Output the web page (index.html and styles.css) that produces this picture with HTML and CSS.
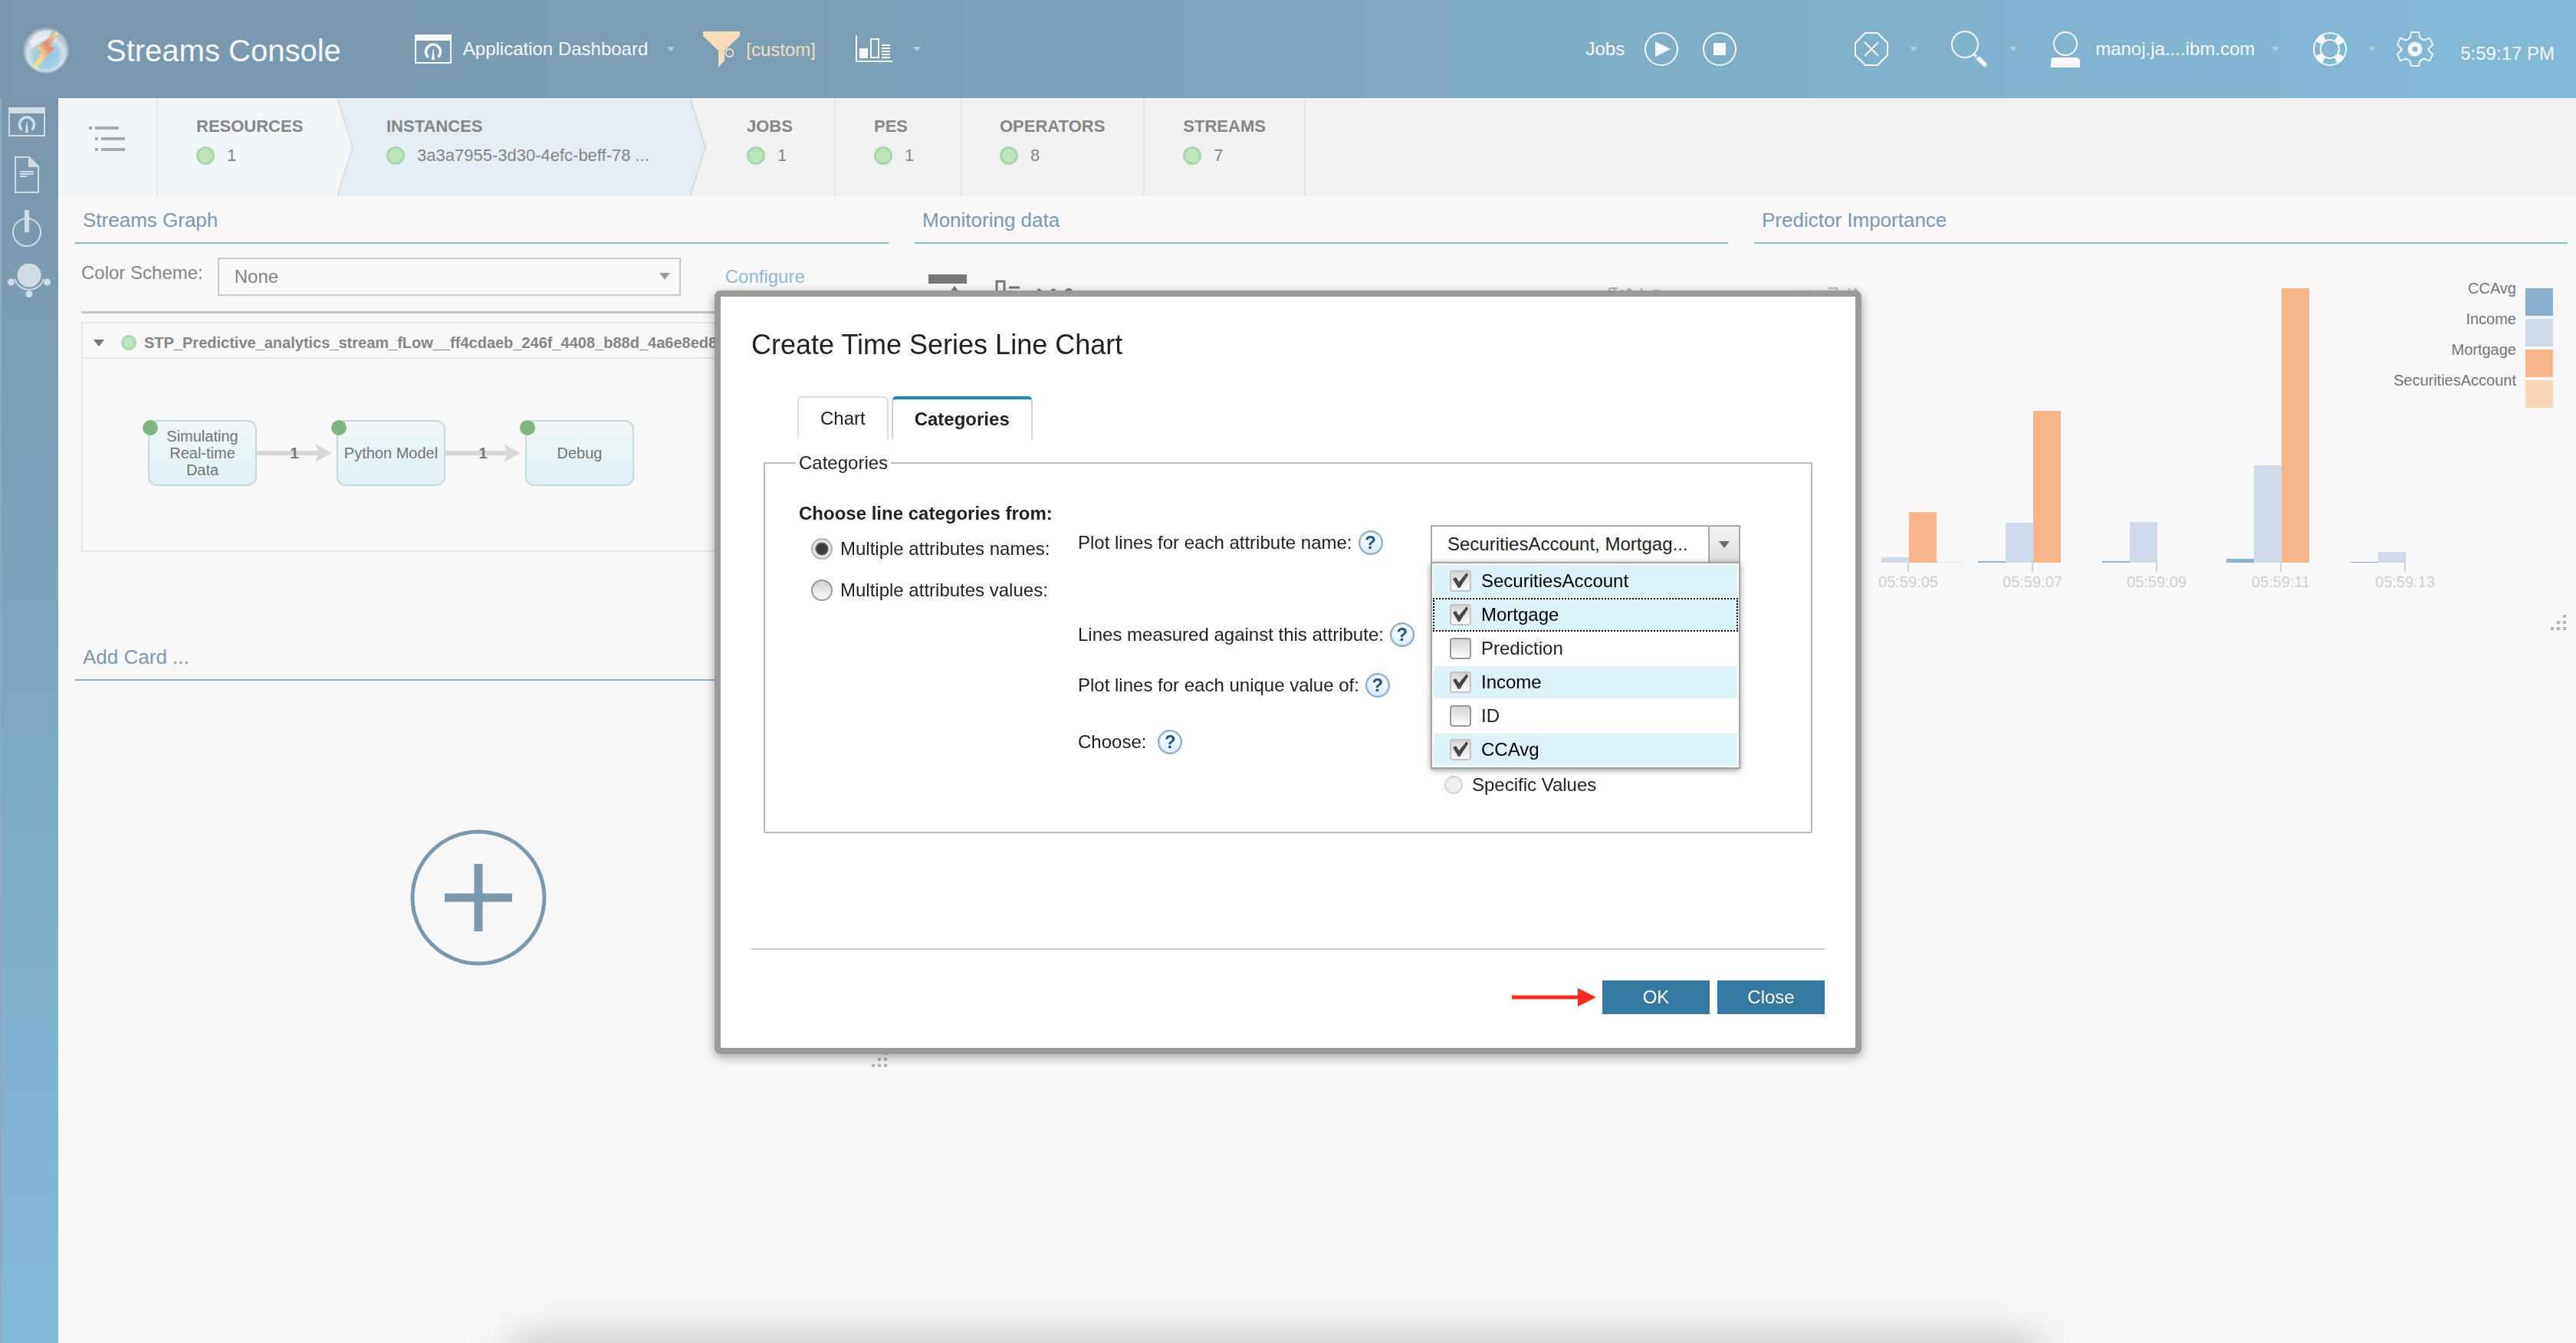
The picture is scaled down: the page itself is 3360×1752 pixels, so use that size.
FILE: index.html
```html
<!DOCTYPE html>
<html lang="en">
<head>
<meta charset="utf-8">
<title>Streams Console</title>
<meta name="viewport" content="width=device-width, initial-scale=1">
<link rel="stylesheet" href="styles.css">
</head>
<body>
<svg class="defs" width="0" height="0" aria-hidden="true">
  <symbol id="i-dash" viewBox="0 0 48 38"><path d="M1 1h46v36H1z" fill="none" stroke="currentColor" stroke-width="2"/><path d="M1 1h46v7H1z" fill="currentColor"/><path d="M17.500 29.500a9.500 9.500 0 1 1 13 0" fill="none" stroke="currentColor" stroke-width="3.500"/><path d="M23.500 19h1l1.500 14h-4z" fill="currentColor"/></symbol>
  <symbol id="i-chev" viewBox="0 0 10 6"><path d="M0 0h10L5 6z" fill="currentColor"/></symbol>
  <symbol id="i-grip" viewBox="0 0 20 20"><path d="M16 0h4v4h-4zM8 8h4v4H8zM16 8h4v4h-4zM0 16h4v4H0zM8 16h4v4H8zM16 16h4v4h-4z" fill="#b4b4b4"/></symbol>
  <symbol id="i-arrow" viewBox="0 0 104 26"><path d="M0 13h88" stroke="#d8d8d8" stroke-width="6"/><path d="M76 1l22 12-22 12 5-12z" fill="#d8d8d8"/></symbol>
</svg>

<header class="topbar">
  <svg class="logo" viewBox="0 0 60 62" aria-hidden="true">
    <defs>
      <radialGradient id="g-ball" cx=".5" cy=".6" r=".5"><stop offset="0" stop-color="#8cc6e2"/><stop offset=".55" stop-color="#a3cfe2"/><stop offset=".8" stop-color="#d3e2e8"/><stop offset="1" stop-color="#b4c6cd"/></radialGradient>
      <linearGradient id="g-bolt" x1="0" y1="1" x2="1" y2="0"><stop offset="0" stop-color="#f2ea96"/><stop offset=".4" stop-color="#f3c684"/><stop offset=".6" stop-color="#ea8476"/><stop offset="1" stop-color="#f6eda0"/></linearGradient>
    </defs>
    <circle cx="30" cy="31" r="29" fill="url(#g-ball)" stroke="#9aaeb8" stroke-width="2"/>
    <path d="M8 20a25 25 0 0 1 30-14l-6 8-20 14z" fill="#eaf0f2" opacity=".8"/>
    <path d="M44 6L16 29l9 3-12 19 4 3 25-27-7-2 11-17z" fill="url(#g-bolt)"/>
  </svg>
  <h1 class="brand">Streams Console</h1>
  <button class="tool tool-dash" type="button"><svg width="48" height="38"><use href="#i-dash"/></svg><span>Application Dashboard</span><svg class="chev" width="10" height="6"><use href="#i-chev"/></svg></button>
  <button class="tool tool-filter" type="button"><svg width="48" height="48" viewBox="0 0 48 48"><path d="M0 1h48v6L28 26v13l-8 9V26L0 7z" fill="currentColor"/><circle cx="34.500" cy="29" r="5" fill="none" stroke="currentColor" stroke-width="2"/></svg><span>[custom]</span></button>
  <button class="tool tool-chart" type="button" aria-label="Charts"><svg width="48" height="36" viewBox="0 0 48 36"><path d="M1 0v34h47" fill="none" stroke="currentColor" stroke-width="2"/><path d="M5 17h11v13H5z" fill="currentColor"/><path d="M20 5h10v24H20z" fill="none" stroke="currentColor" stroke-width="2"/><path d="M34 13h11M34 17h11M34 21h11M34 25h11M34 29h11" stroke="currentColor" stroke-width="2"/></svg><svg class="chev" width="10" height="6"><use href="#i-chev"/></svg></button>

  <div class="status">
    <span>Jobs</span>
    <button class="icon-btn play" type="button" aria-label="Submit job"><svg width="44" height="44" viewBox="0 0 44 44"><circle cx="22" cy="22" r="21" fill="none" stroke="currentColor" stroke-width="2"/><path d="M14 12l20 10-20 10z" fill="currentColor"/></svg></button>
    <button class="icon-btn stop" type="button" aria-label="Cancel job"><svg width="44" height="44" viewBox="0 0 44 44"><circle cx="22" cy="22" r="21" fill="none" stroke="currentColor" stroke-width="2"/><path d="M14 14h16v16H14z" fill="currentColor"/></svg></button>
    <button class="icon-btn errors" type="button" aria-label="Errors"><svg width="44" height="44" viewBox="0 0 44 44"><path d="M14 1h16l13 13v16L30 43H14L1 30V14zM13 13l18 18M31 13L13 31" fill="none" stroke="currentColor" stroke-width="2"/></svg><svg class="chev" width="10" height="6"><use href="#i-chev"/></svg></button>
    <button class="icon-btn" type="button" aria-label="Search"><svg width="48" height="48" viewBox="0 0 48 48"><circle cx="18" cy="18" r="17" fill="none" stroke="currentColor" stroke-width="2"/><path d="M29 30l4 4" stroke="currentColor" stroke-width="3"/><path d="M32 37l5-4 10 11-3 4z" fill="currentColor"/></svg><svg class="chev" width="10" height="6"><use href="#i-chev"/></svg></button>
    <button class="icon-btn" type="button"><svg width="38" height="48" viewBox="0 0 38 48"><circle cx="19" cy="17" r="15" fill="none" stroke="currentColor" stroke-width="2"/><path d="M0 48V40q0-5 5-5h28q5 0 5 5v8z" fill="currentColor"/></svg><span class="user">manoj.ja....ibm.com</span><svg class="chev" width="10" height="6"><use href="#i-chev"/></svg></button>
    <button class="icon-btn" type="button" aria-label="Help"><svg width="44" height="44" viewBox="0 0 44 44"><g fill="none" stroke="currentColor"><circle cx="22" cy="22" r="21" stroke-width="2"/><circle cx="22" cy="22" r="12" stroke-width="2"/><circle cx="22" cy="22" r="16.500" stroke-width="9" stroke-dasharray="10 15.920" stroke-dashoffset="-8"/></g></svg><svg class="chev" width="10" height="6"><use href="#i-chev"/></svg></button>
    <button class="icon-btn" type="button" aria-label="Settings"><svg width="48" height="48" viewBox="0 0 48 48"><path d="M19 1h10l2 8 5 3 8-3 4 9-6 6 0 1 6 6-4 9-8-3-5 3-2 7H19l-2-7-5-3-8 3-4-9 6-6v-1l-6-6 4-9 8 3 5-3z" transform="translate(1 1) scale(.96)" fill="none" stroke="currentColor" stroke-width="2"/><circle cx="24" cy="24" r="6.500" fill="none" stroke="currentColor" stroke-width="6"/></svg></button>
    <time class="clock">5:59:17 PM</time>
  </div>
</header>

<div class="shell">
  <nav class="rail" aria-label="Views">
    <a class="first" href="#dashboards" aria-label="Dashboards"><svg width="48" height="38"><use href="#i-dash"/></svg></a>
    <a href="#logs" aria-label="Logs"><svg width="32" height="48" viewBox="0 0 32 48"><path d="M1 1h18l12 12v34H1z" fill="none" stroke="currentColor" stroke-width="2"/><path d="M18 1l13 13H18z" fill="currentColor"/><path d="M7 20h18M7 23h18M7 26h9" stroke="currentColor" stroke-width="2"/></svg></a>
    <a href="#instance" aria-label="Instance control"><svg width="38" height="48" viewBox="0 0 38 48"><circle cx="19" cy="29" r="18" fill="none" stroke="currentColor" stroke-width="2"/><path d="M16 0h6v29h-6z" fill="currentColor"/></svg></a>
    <a class="wide" href="#graph" aria-label="Graph"><svg width="56" height="44" viewBox="0 0 56 44"><circle cx="28" cy="15" r="15.500" fill="currentColor"/><circle cx="4.500" cy="24" r="4.500" fill="currentColor"/><circle cx="51.500" cy="24" r="4.500" fill="currentColor"/><circle cx="28" cy="39.500" r="4.500" fill="currentColor"/><path d="M9 20a20 20 0 0 0 38 0M28 33v4" fill="none" stroke="currentColor" stroke-width="2"/></svg></a>
  </nav>

  <div class="content">
    <div class="crumbs">
      <button class="crumb-menu" type="button" aria-label="Tree view"><svg width="48" height="34" viewBox="0 0 48 34"><path d="M0 1h4v4H0zM8 1h31v4H8zM8 15h4v4H8zM16 15h31v4H16zM8 29h4v4H8zM16 29h31v4H16z" fill="#a9a9a9"/></svg></button>
      <div class="crumb crumb-res"><h2>RESOURCES</h2><p><i class="dot"></i>1</p><svg class="point" width="22" height="128" viewBox="0 0 22 128"><path d="M0 0l20 64L0 128" fill="#eff5f8" stroke="#dadfe0" stroke-width="2"/></svg></div>
      <div class="crumb crumb-inst"><h2>INSTANCES</h2><p><i class="dot"></i>3a3a7955-3d30-4efc-beff-78 ...</p><svg class="point" width="22" height="128" viewBox="0 0 22 128"><path d="M0 0l20 64L0 128" fill="#e4edf3" stroke="#d6dadd" stroke-width="2"/></svg></div>
      <div class="crumb crumb-jobs"><h2>JOBS</h2><p><i class="dot"></i>1</p></div>
      <div class="crumb"><h2>PES</h2><p><i class="dot"></i>1</p></div>
      <div class="crumb"><h2>OPERATORS</h2><p><i class="dot"></i>8</p></div>
      <div class="crumb"><h2>STREAMS</h2><p><i class="dot"></i>7</p></div>
    </div>

    <main class="cards">
      <section class="card">
        <h2 class="card-title">Streams Graph</h2>
        <div class="graph-tools">
          <label for="scheme">Color Scheme:</label>
          <div class="select-wrap"><select id="scheme"><option>None</option></select><svg width="14" height="9" viewBox="0 0 14 9"><path d="M0 0h14L7 9z" fill="#9c9c9c"/></svg></div>
          <a class="configure" href="#configure">Configure</a>
        </div>
        <div class="job">
          <div class="job-head"><svg width="14" height="9" viewBox="0 0 14 9"><path d="M0 0h14L7 9z" fill="#777"/></svg><i class="dot dot-small"></i><span>STP_Predictive_analytics_stream_fLow__ff4cdaeb_246f_4408_b88d_4a6e8ed899</span></div>
          <div class="flow">
            <div class="node">Simulating Real-time Data</div>
            <div class="link"><svg width="104" height="26"><use href="#i-arrow"/></svg><span>1</span></div>
            <div class="node">Python Model</div>
            <div class="link"><svg width="104" height="26"><use href="#i-arrow"/></svg><span>1</span></div>
            <div class="node">Debug</div>
          </div>
        </div>
      </section>

      <section class="card">
        <h2 class="card-title">Monitoring data</h2>
        <svg class="monitor" width="960" height="60" viewBox="0 0 960 60" aria-hidden="true"><path d="M0 0h50v12H0zM34 15l9 12H25z" fill="#777"/><path d="M89 30V9h10v21M105 17h14" fill="none" stroke="#777" stroke-width="3"/><path d="M140 22l4-4 5 4zM158 22q5-7 10 0zM177 22q6-8 12 0z" fill="#777"/><path d="M886 24l3-6M889 18h10M895 18v6M905 20v4M914 18v6M911 20h6M930 18v6M946 21h8" fill="none" stroke="#b0b0b0" stroke-width="2"/></svg>
      </section>

      <section class="card card-chart">
        <h2 class="card-title">Predictor Importance</h2>
        <svg class="bars" width="1060" height="460" viewBox="0 0 1060 460" role="img" aria-label="Predictor importance over time">
          <path d="M58 62h8M70 62h8M82 62h8M96 58h12v6M122 64l3-6M128 64l4-5 4 5" fill="none" stroke="#c5cbd0" stroke-width="3"/>
          <g fill="#8ab0ce"><path d="M292 414h36v2h-36zM454 414h36v2h-36zM616 411h36v5h-36zM778 415h36v1h-36z"/></g>
          <g fill="#cfdaea"><path d="M166 409h36v7h-36zM328 364h36v52h-36zM490 363h36v53h-36zM652 289h36v127h-36zM814 402h36v14h-36z"/></g>
          <g fill="#f6b68a"><path d="M202 350h36v66h-36zM364 218h36v198h-36zM688 58h36v358h-36z"/></g>
          <path d="M238 415h36v1h-36z" fill="#f5e3d5"/>
          <path d="M201 416v12M363 416v12M525 416v12M687 416v12M849 416v12" stroke="#ccd1d3" stroke-width="2"/>
          <g class="ticks"><text x="201" y="448">05:59:05</text><text x="363" y="448">05:59:07</text><text x="525" y="448">05:59:09</text><text x="687" y="448">05:59:11</text><text x="849" y="448">05:59:13</text></g>
          <g class="legend"><text x="994" y="65">CCAvg</text><text x="994" y="105">Income</text><text x="994" y="145">Mortgage</text><text x="994" y="185">SecuritiesAccount</text></g>
          <path d="M1006 58h36v36h-36z" fill="#8ab0ce"/><path d="M1006 98h36v36h-36z" fill="#cfdaea"/><path d="M1006 138h36v36h-36z" fill="#f6b68a"/><path d="M1006 178h36v36h-36z" fill="#f6d4b4"/>
        </svg>
        <svg class="grip" width="20" height="20"><use href="#i-grip"/></svg>
      </section>

      <section class="card card-add">
        <h2 class="card-title">Add Card ...</h2>
        <button class="add" type="button" aria-label="Add card"><svg width="178" height="178" viewBox="0 0 178 178"><circle cx="89" cy="89" r="86" fill="none" stroke="#7c98ab" stroke-width="5"/><path d="M45 89h88M89 45v88" stroke="#7c98ab" stroke-width="11"/></svg></button>
        <svg class="grip" width="20" height="20"><use href="#i-grip"/></svg>
      </section>
    </main>
  </div>
</div>

<div class="dock-shadow"></div>

<div class="overlay">
  <form class="dialog" role="dialog" aria-labelledby="dlg-title">
    <h2 id="dlg-title">Create Time Series Line Chart</h2>
    <div class="tabs" role="tablist"><button type="button" role="tab">Chart</button><button class="active" type="button" role="tab" aria-selected="true">Categories</button></div>
    <fieldset>
      <legend>Categories</legend>
      <div class="form">
        <div class="col-source">
          <strong>Choose line categories from:</strong>
          <label class="opt"><input type="radio" name="source" checked>Multiple attributes names:</label>
          <label class="opt"><input type="radio" name="source">Multiple attributes values:</label>
        </div>
        <div class="col-labels">
          <p class="r1"><span>Plot lines for each attribute name:</span><button class="help" type="button">?</button></p>
          <p class="r2"><span>Lines measured against this attribute:</span><button class="help" type="button">?</button></p>
          <p class="r3"><span>Plot lines for each unique value of:</span><button class="help" type="button">?</button></p>
          <p class="r4"><span>Choose:</span><button class="help" type="button">?</button></p>
        </div>
        <div class="col-values">
          <div class="combo">
            <button class="combo-btn" type="button" aria-haspopup="listbox" aria-expanded="true"><span class="combo-text">SecuritiesAccount, Mortgag...</span><span class="combo-arrow"><svg width="14" height="9" viewBox="0 0 14 9"><path d="M0 0h14L7 9z" fill="#6b6b6b"/></svg></span></button>
            <div class="menu">
              <label class="on"><input type="checkbox" checked>SecuritiesAccount</label>
              <label class="on focus"><input type="checkbox" checked>Mortgage</label>
              <label><input type="checkbox">Prediction</label>
              <label class="on"><input type="checkbox" checked>Income</label>
              <label><input type="checkbox">ID</label>
              <label class="on"><input type="checkbox" checked>CCAvg</label>
            </div>
          </div>
          <label class="specific"><input type="radio" name="choose" disabled>Specific Values</label>
        </div>
      </div>
    </fieldset>
    <footer>
      <svg width="110" height="26" viewBox="0 0 110 26" aria-hidden="true"><path d="M0 13h88" stroke="#fb2a1c" stroke-width="5"/><path d="M86 1l24 12-24 12z" fill="#fb2a1c"/></svg>
      <button type="button">OK</button>
      <button type="button">Close</button>
    </footer>
  </form>
</div>
</body>
</html>
```
FILE: styles.css
```css
* { box-sizing: border-box; }
body { margin: 0; min-height: 100vh; display: flex; flex-direction: column; overflow: hidden; background: #f7f7f7; color: #868686; font: 24px/28px "Liberation Sans", Arial, sans-serif; }
h1, h2, p, fieldset { margin: 0; font-weight: normal; }
button { font: inherit; color: inherit; background: none; border: 0; padding: 0; }
svg { display: block; flex: none; }
.defs { position: absolute; }

/* top bar */
.topbar { display: flex; align-items: center; flex: none; height: 128px; padding: 0 28px 0 30px; color: #f7f7f7; background: linear-gradient(90deg, #7a96ac 0%, #7da2b9 40%, #80b1ca 70%, #82bad6 100%); white-space: nowrap; }
.logo { width: 60px; height: 62px; margin-top: 4px; }
.brand { padding: 4px 0 0 48px; font-size: 40px; line-height: 48px; }
.tool { display: flex; align-items: center; }
.tool span { line-height: 28px; }
.chev { color: #b4ccd9; }
.tool-dash { margin-left: 96px; gap: 15px; }
.tool-dash .chev { margin-left: 10px; }
.tool-filter { margin-left: 37px; gap: 8px; color: #f7dcbc; }
.tool-filter span { padding-top: 2px; }
.tool-chart { margin-left: 52px; gap: 27px; }
.status { display: flex; align-items: center; margin-left: auto; }
.icon-btn { display: flex; align-items: center; margin-left: 44px; }
.icon-btn .chev { margin-left: 28px; }
.icon-btn.play { margin-left: 26px; }
.icon-btn.stop { margin-left: 32px; }
.icon-btn.errors { margin-left: 154px; }
.icon-btn .user { margin-left: 20px; }
.icon-btn .user + .chev { margin-left: 22px; }
.icon-btn:nth-last-child(2) { margin-left: 27px; }
.clock { margin-left: 35px; padding-top: 12px; }

/* side rail */
.shell { display: flex; flex: 1; }
.rail { display: flex; flex-direction: column; align-items: center; flex: none; width: 76px; padding: 12px 8px 0 0; gap: 22px; border-left: 2px solid #8faabd; color: #d0dbe3; background: linear-gradient(#7a96ac, #7da2b9 33%, #7fb0c9 66%, #82bad6); }
.rail a { color: inherit; }
.rail .first { margin-bottom: 4px; }
.rail .wide { padding-left: 6px; }
.content { flex: 1; min-width: 0; }

/* resource breadcrumb */
.crumbs { display: flex; height: 128px; background: #f1f1f1; font-size: 22px; line-height: 26px; white-space: nowrap; }
.crumb-menu { width: 130px; padding: 0 0 22px 40px; border-right: 2px solid #e6e8e8; background: #eff5f8; }
.crumb { position: relative; min-width: 164px; padding: 24px 50px 0; border-right: 2px solid #e7e7e7; }
.crumb h2 { font-size: 22px; line-height: 26px; font-weight: bold; }
.crumb p { display: flex; align-items: center; gap: 16px; margin-top: 12px; }
.crumb-res { width: 234px; padding-right: 0; border: 0; background: #eff5f8; }
.crumb-inst { width: 460px; padding: 24px 0 0 64px; border: 0; background: #e4edf3; }
.crumb-jobs { width: 190px; padding: 24px 0 0 74px; }
.point { position: absolute; left: 100%; top: 0; z-index: 1; }
.dot { flex: none; width: 24px; height: 24px; border: 3px solid #a5d8ac; border-radius: 50%; background: #c0e4bb; }
.dot-small { width: 20px; height: 20px; }

/* cards */
.cards { display: grid; grid-template-columns: repeat(3, minmax(0, 1fr)); grid-auto-rows: minmax(566px, auto); gap: 4px 34px; padding: 0 11px 0 22px; }
.card { position: relative; }
.card-title { padding: 16px 10px 14px; border-bottom: 2px solid #82bad4; font-size: 26px; line-height: 30px; color: #7a9ab0; }
.grip { position: absolute; right: 2px; bottom: 0; }
.graph-tools { display: flex; align-items: center; margin: 18px 0 0 8px; padding-bottom: 20px; border-bottom: 3px solid #c3c3c3; }
.graph-tools label { align-self: flex-start; line-height: 40px; }
.select-wrap { position: relative; margin: 0 58px 0 19px; }
.select-wrap select { display: block; width: 604px; height: 50px; padding: 0 20px; border: 2px solid #c8c8c8; border-radius: 0; appearance: none; background: #f7f7f7; color: inherit; font: inherit; }
.select-wrap svg { position: absolute; right: 14px; top: 20px; }
.configure { color: #92b9d1; text-decoration: none; }
.job { margin: 11px 8px 0; height: 300px; border: 2px solid #e4e4e4; }
.job-head { display: flex; align-items: center; height: 46px; padding: 6px 0 0 14px; border-bottom: 2px solid #e4e4e4; font-size: 20px; font-weight: bold; }
.job-head .dot { margin: 0 10px 0 22px; }
.flow { display: flex; align-items: center; padding: 80px 0 0 85px; font-size: 20px; line-height: 22px; color: #757575; }
.node { position: relative; display: flex; align-items: center; justify-content: center; width: 142px; height: 86px; padding: 0 16px; border: 2px solid #c2dadd; border-radius: 12px; background: linear-gradient(#f0f5f5, #dff1f6); text-align: center; }
.node:nth-child(n+3) { padding: 0; }
.node::before { content: ""; position: absolute; left: -9px; top: -2px; width: 20px; height: 20px; border-radius: 50%; background: #80b681; }
.link { position: relative; width: 104px; text-align: center; font-weight: bold; }
.link span { position: absolute; inset: 2px 6px 0 0; }
.monitor { margin: 40px 0 0 18px; }
.bars { font-size: 20px; }
.ticks { text-anchor: middle; fill: #ccd0d2; }
.legend { text-anchor: end; fill: #757575; }
.add { display: block; margin: 194px auto 0 437px; }

/* glow above the system dock */
.dock-shadow { position: fixed; left: 20%; right: 21%; bottom: -28px; height: 20px; border-radius: 30px; box-shadow: 0 0 56px 10px rgba(0, 0, 0, .28); }

/* dialog */
.overlay { position: fixed; inset: 0; display: grid; place-items: center; padding-top: 2px; }
.dialog { width: 1496px; padding: 42px 40px 44px; border: 8px solid #9a9a9a; border-radius: 8px; background: #fff; color: #222; box-shadow: 0 4px 14px rgba(0, 0, 0, .35); }
.dialog > h2 { font-size: 36px; line-height: 42px; }
.tabs { display: flex; gap: 4px; margin: 46px 0 17px 60px; }
.tabs button { height: 56px; padding: 0 28px; border: 2px solid #dedede; border-bottom: 0; border-radius: 6px 6px 0 0; }
.tabs .active { border-color: #d0d0d0; border-top: 4px solid #178bbf; font-weight: bold; }
fieldset { margin: 0 16px; padding: 0; border: 2px solid #b9b9be; }
legend { margin-left: 40px; padding: 0 4px; }
.form { display: grid; grid-template-columns: 364px 460px 404px; padding: 0 0 47px 44px; }
.col-source { display: flex; flex-direction: column; padding-top: 38px; }
.opt { display: flex; align-items: center; gap: 10px; margin: 26px 0 0 16px; }
strong + .opt { margin-top: 18px; }
input { appearance: none; flex: none; margin: 0; }
input[type="radio"] { width: 28px; height: 28px; border: 2px solid #999; border-radius: 50%; background: linear-gradient(#d2d2d2, #fafafa); }
input[type="radio"]:checked { background: radial-gradient(circle, #3c3c3c 0 6px, #666 8px, #e4e4e4 9px); border-color: #b4b4b4; }
input[type="radio"]:disabled { width: 24px; height: 24px; border-color: #d2d2d2; background: #eee; }
.col-labels { padding-top: 74px; }
.col-labels p { display: flex; align-items: center; height: 32px; gap: 8px; }
.col-labels .r2 { margin-top: 88px; }
.col-labels .r3 { margin-top: 34px; }
.col-labels .r4 { margin-top: 42px; gap: 15px; }
.help { width: 32px; height: 32px; border: 2px solid #86abd0; border-radius: 50%; background: linear-gradient(#fff, #dcebf6); box-shadow: inset 0 0 0 1px #c5daee; color: #1c5687; font-weight: bold; line-height: 28px; }
.col-values { padding-top: 67px; }
.combo { position: relative; }
.combo-btn { display: flex; width: 100%; height: 50px; border: 2px solid #a9a9a9; background: #fff; }
.combo-text { flex: 1; padding-left: 20px; line-height: 46px; text-align: left; }
.combo-arrow { display: flex; align-items: center; justify-content: center; width: 40px; align-self: stretch; border-left: 2px solid #a9a9a9; background: linear-gradient(#f4f4f4, #dcdcdc); }
.menu { position: absolute; left: 0; right: 0; top: 48px; display: flex; flex-direction: column; gap: 2px; padding: 2px; border: 2px solid #a3a3a3; background: #fff; box-shadow: 0 2px 8px rgba(0, 0, 0, .4); }
.menu label { display: flex; align-items: center; height: 42px; padding: 0 0 0 21px; gap: 13px; }
.menu label.on { background: #ddf1f9; color: #000; }
.menu label.focus { outline: 2px dotted #000; outline-offset: -1px; }
input[type="checkbox"] { width: 28px; height: 28px; border: 2px solid #999; border-radius: 4px; background: linear-gradient(#d6d6d6, #fbfbfb); }
input[type="checkbox"]:checked { border-color: #c4c4c4; background: url("data:image/svg+xml,%3Csvg xmlns='http://www.w3.org/2000/svg' viewBox='0 0 24 24'%3E%3Cpath d='M2 9l4-2 4 6L20 1l2 3L11 21H9z' fill='%23484848'/%3E%3C/svg%3E") center / 24px no-repeat, linear-gradient(#d6d6d6, #fbfbfb); }
.specific { display: flex; align-items: center; gap: 12px; margin: 275px 0 0 18px; }
footer { display: flex; align-items: center; justify-content: flex-end; margin-top: 150px; padding-top: 40px; border-top: 2px solid #cacaca; }
footer button { width: 140px; height: 44px; margin-left: 10px; background: #3379a1; color: #fff; }
footer svg { margin-right: -2px; }
```
